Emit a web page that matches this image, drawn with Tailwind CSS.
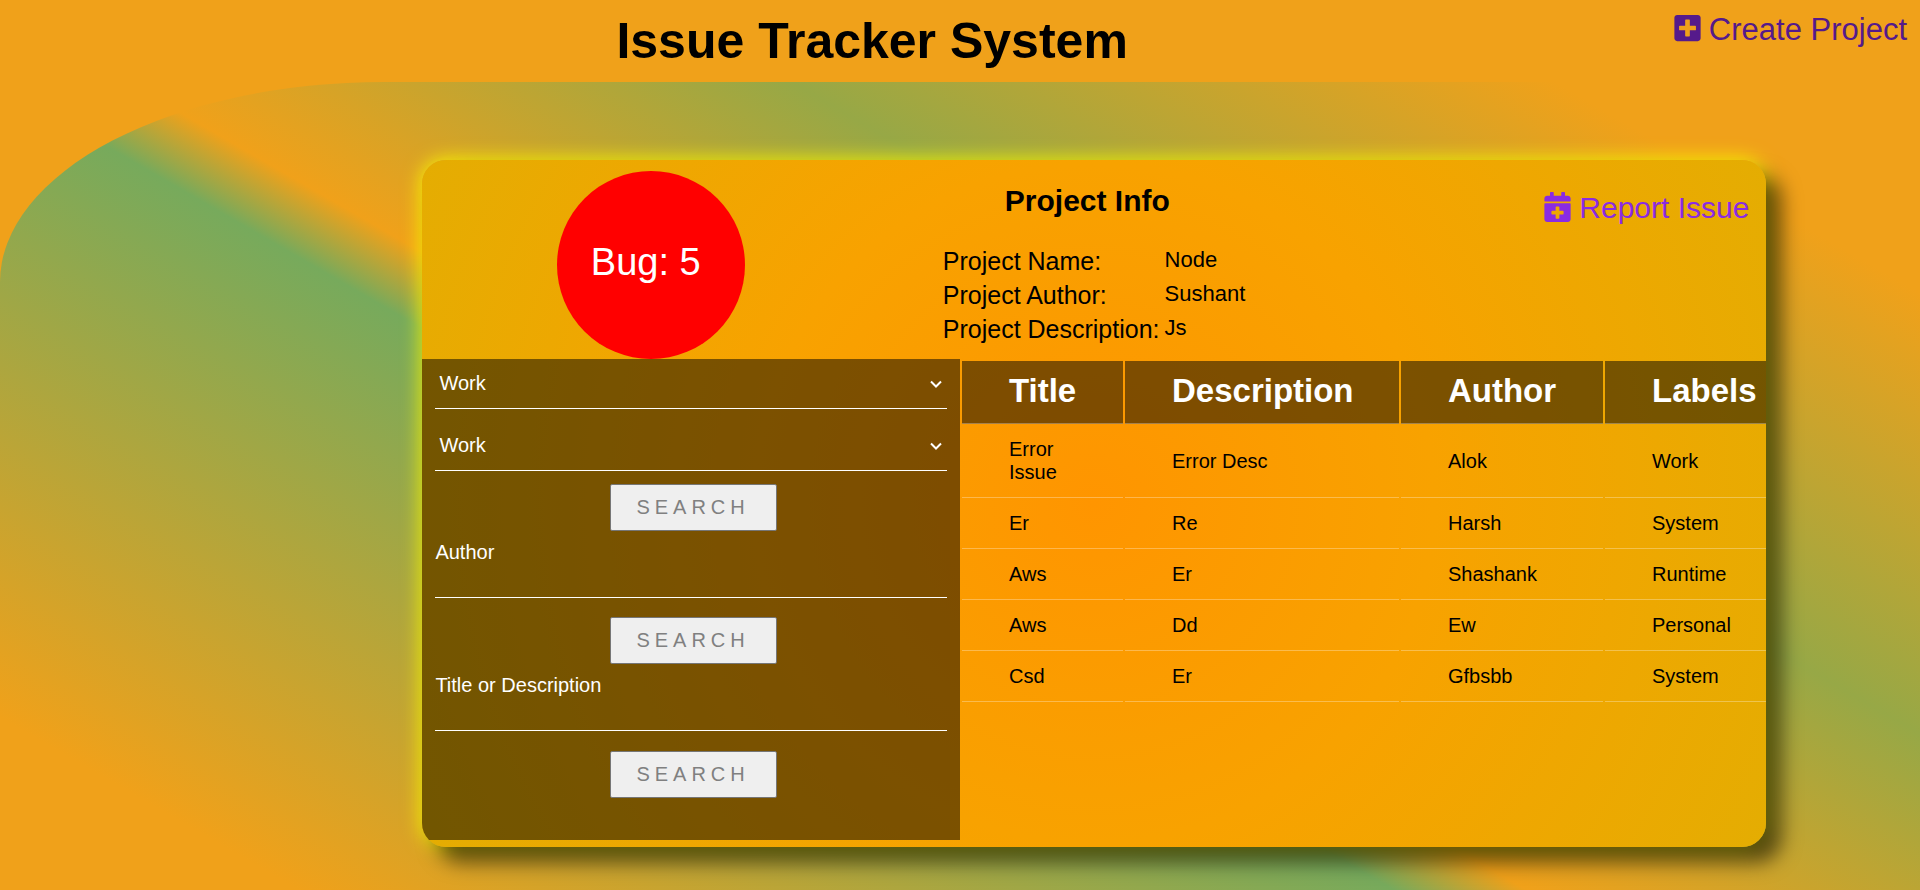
<!DOCTYPE html>
<html lang="en">
<head>
<meta charset="utf-8">
<meta name="viewport" content="width=device-width, initial-scale=1">
<title>Issue Tracker System</title>
<script src="https://cdn.jsdelivr.net/npm/@tailwindcss/browser@4"></script>
</head>
<body class="flex min-h-screen flex-col overflow-x-hidden bg-[#f0a11a] font-['Liberation_Sans',Arial,sans-serif] text-black">
  <header class="flex h-[82px] items-start justify-between pr-[13px] pl-[32%]">
    <h1 class="ml-[2px] pt-[13px] text-[50px] leading-[56px] font-bold whitespace-nowrap">Issue Tracker System</h1>
    <a href="#create" class="mt-[13px] flex items-start gap-2 text-[31px] leading-[34px] whitespace-nowrap text-[#551a8b]">
      <svg class="h-[30px] w-[27px]" viewBox="0 0 448 512" fill="currentColor" aria-hidden="true"><path d="M48 32C21 32 0 53 0 80V432c0 27 21 48 48 48H400c27 0 48-21 48-48V80c0-27-21-48-48-48H48zM368 284c0 6.600-5.400 12-12 12H264v92c0 6.600-5.400 12-12 12H196c-6.600 0-12-5.400-12-12V296H92c-6.600 0-12-5.400-12-12V228c0-6.600 5.400-12 12-12H184V124c0-6.600 5.400-12 12-12H252c6.600 0 12 5.400 12 12V216H356c6.600 0 12 5.400 12 12V284z"/></svg>
      <span>Create Project</span>
    </a>
  </header>

  <main class="flex-1 rounded-tl-[20%_200px] bg-[linear-gradient(30deg,#f0a11a_9%,#77aa5c_42%,#f0a11a_46%,#97a846_66%,#f0a11a_89%)] pt-[78px] pb-[43px]">
    <section class="ml-[22%] flex min-h-[687px] w-[70%] flex-col overflow-hidden rounded-[24px] bg-[radial-gradient(circle,#ff9500,#f8a200_45%,#e4ad02)] shadow-[15px_15px_20px_rgba(0,0,0,0.6),0_0_20px_yellow]">
      <div class="flex items-start pt-[11px]">
        <div class="ml-[10%] flex size-[188px] shrink-0 items-center justify-center rounded-full bg-[#ff0000] pr-[10px] pb-[5px] text-[38px] text-white">Bug: 5</div>
        <div class="ml-[198px] pt-[13px]">
          <h2 class="pl-[62px] text-[30px] leading-[34px] font-bold">Project Info</h2>
          <dl class="mt-[29px] grid grid-cols-[auto_auto] justify-start gap-x-[5px] gap-y-[5px] text-[25px] leading-[29px] whitespace-nowrap">
            <dt>Project Name:</dt><dd class="text-[22px] leading-[26px]">Node</dd>
            <dt>Project Author:</dt><dd class="text-[22px] leading-[26px]">Sushant</dd>
            <dt>Project Description:</dt><dd class="text-[22px] leading-[26px]">Js</dd>
          </dl>
        </div>
        <a href="#report" class="mt-5 mr-[17px] ml-auto flex items-start gap-2 text-[30px] leading-[34px] whitespace-nowrap text-[#8a2be2]">
          <svg class="mt-px h-[30px] w-[27px]" viewBox="0 0 448 512" fill="currentColor" aria-hidden="true"><path d="M436 160H12c-6.600 0-12-5.400-12-12v-36c0-26.500 21.500-48 48-48h48V12c0-6.600 5.400-12 12-12h40c6.600 0 12 5.400 12 12v52h128V12c0-6.600 5.400-12 12-12h40c6.600 0 12 5.400 12 12v52h48c26.500 0 48 21.500 48 48v36c0 6.600-5.400 12-12 12zM12 192h424c6.600 0 12 5.400 12 12v260c0 26.500-21.500 48-48 48H48c-26.500 0-48-21.500-48-48V204c0-6.600 5.400-12 12-12zm316 140c0-6.600-5.400-12-12-12h-60v-60c0-6.600-5.400-12-12-12h-40c-6.600 0-12 5.400-12 12v60h-60c-6.600 0-12 5.400-12 12v40c0 6.600 5.400 12 12 12h60v60c0 6.600 5.400 12 12 12h40c6.600 0 12-5.400 12-12v-60h60c6.600 0 12-5.400 12-12v-40z"/></svg>
          <span>Report Issue</span>
        </a>
      </div>

      <div class="flex flex-1">
        <div class="mb-[7px] w-2/5 shrink-0 bg-black/50 px-[13px] pb-[42px] text-[20px] leading-[23px] text-white">
          <form class="flex flex-col">
            <div class="grid grid-cols-1 items-center">
              <select aria-label="Label" class="col-start-1 row-start-1 h-[50px] appearance-none rounded-none border-b border-white bg-transparent px-1"><option>Work</option></select>
              <svg class="pointer-events-none col-start-1 row-start-1 mr-[5px] h-2 w-3 justify-self-end" viewBox="0 0 12 8" fill="none" stroke="currentColor" stroke-width="2" aria-hidden="true"><path d="M1 1.500L6 6.500L11 1.500"/></svg>
            </div>
            <div class="mt-3 grid grid-cols-1 items-center">
              <select aria-label="Second label" class="col-start-1 row-start-1 h-[50px] appearance-none rounded-none border-b border-white bg-transparent px-1"><option>Work</option></select>
              <svg class="pointer-events-none col-start-1 row-start-1 mr-[5px] h-2 w-3 justify-self-end" viewBox="0 0 12 8" fill="none" stroke="currentColor" stroke-width="2" aria-hidden="true"><path d="M1 1.500L6 6.500L11 1.500"/></svg>
            </div>
            <button class="mt-[13px] ml-[175px] h-[47px] self-start rounded-[2px] border border-[#767676] bg-[#efefef] pr-[26px] pl-[25px] tracking-[5px] text-[#808080]">SEARCH</button>
          </form>
          <form class="flex flex-col">
            <label for="author" class="mt-[10px]">Author</label>
            <input id="author" type="text" class="h-[34px] border-b border-white bg-transparent outline-none">
            <button class="mt-[19px] ml-[175px] h-[47px] self-start rounded-[2px] border border-[#767676] bg-[#efefef] pr-[26px] pl-[25px] tracking-[5px] text-[#808080]">SEARCH</button>
          </form>
          <form class="flex flex-col">
            <label for="text" class="mt-[10px]">Title or Description</label>
            <input id="text" type="text" class="h-[34px] border-b border-white bg-transparent outline-none">
            <button class="mt-[20px] ml-[175px] h-[47px] self-start rounded-[2px] border border-[#767676] bg-[#efefef] pr-[26px] pl-[25px] tracking-[5px] text-[#808080]">SEARCH</button>
          </form>
        </div>

        <div class="min-w-0 flex-1 overflow-hidden pt-[2px]">
          <table class="w-[855px] table-fixed border-separate border-spacing-x-[2px] border-spacing-y-0 text-left text-[20px] leading-[23px]">
            <colgroup><col class="w-[161px]"><col class="w-[274px]"><col class="w-[202px]"><col></colgroup>
            <thead class="text-[33px] leading-[37px] text-white">
              <tr>
                <th class="border-b border-white/30 bg-black/50 pt-[11px] pr-[45px] pb-[14px] pl-[47px]">Title</th>
                <th class="border-b border-white/30 bg-black/50 pt-[11px] pr-[45px] pb-[14px] pl-[47px]">Description</th>
                <th class="border-b border-white/30 bg-black/50 pt-[11px] pr-[45px] pb-[14px] pl-[47px]">Author</th>
                <th class="border-b border-white/30 bg-black/50 pt-[11px] pr-[45px] pb-[14px] pl-[47px]">Labels</th>
              </tr>
            </thead>
            <tbody>
              <tr>
                <td class="border-b border-white/30 pt-[14px] pr-12 pb-[13px] pl-[47px]">Error Issue</td>
                <td class="border-b border-white/30 pt-[14px] pr-12 pb-[13px] pl-[47px]">Error Desc</td>
                <td class="border-b border-white/30 pt-[14px] pr-12 pb-[13px] pl-[47px]">Alok</td>
                <td class="border-b border-white/30 pt-[14px] pr-12 pb-[13px] pl-[47px]">Work</td>
              </tr>
              <tr>
                <td class="border-b border-white/30 pt-[14px] pr-12 pb-[13px] pl-[47px]">Er</td>
                <td class="border-b border-white/30 pt-[14px] pr-12 pb-[13px] pl-[47px]">Re</td>
                <td class="border-b border-white/30 pt-[14px] pr-12 pb-[13px] pl-[47px]">Harsh</td>
                <td class="border-b border-white/30 pt-[14px] pr-12 pb-[13px] pl-[47px]">System</td>
              </tr>
              <tr>
                <td class="border-b border-white/30 pt-[14px] pr-12 pb-[13px] pl-[47px]">Aws</td>
                <td class="border-b border-white/30 pt-[14px] pr-12 pb-[13px] pl-[47px]">Er</td>
                <td class="border-b border-white/30 pt-[14px] pr-12 pb-[13px] pl-[47px]">Shashank</td>
                <td class="border-b border-white/30 pt-[14px] pr-12 pb-[13px] pl-[47px]">Runtime</td>
              </tr>
              <tr>
                <td class="border-b border-white/30 pt-[14px] pr-12 pb-[13px] pl-[47px]">Aws</td>
                <td class="border-b border-white/30 pt-[14px] pr-12 pb-[13px] pl-[47px]">Dd</td>
                <td class="border-b border-white/30 pt-[14px] pr-12 pb-[13px] pl-[47px]">Ew</td>
                <td class="border-b border-white/30 pt-[14px] pr-12 pb-[13px] pl-[47px]">Personal</td>
              </tr>
              <tr>
                <td class="border-b border-white/30 pt-[14px] pr-12 pb-[13px] pl-[47px]">Csd</td>
                <td class="border-b border-white/30 pt-[14px] pr-12 pb-[13px] pl-[47px]">Er</td>
                <td class="border-b border-white/30 pt-[14px] pr-12 pb-[13px] pl-[47px]">Gfbsbb</td>
                <td class="border-b border-white/30 pt-[14px] pr-12 pb-[13px] pl-[47px]">System</td>
              </tr>
            </tbody>
          </table>
        </div>
      </div>
    </section>
  </main>
</body>
</html>
